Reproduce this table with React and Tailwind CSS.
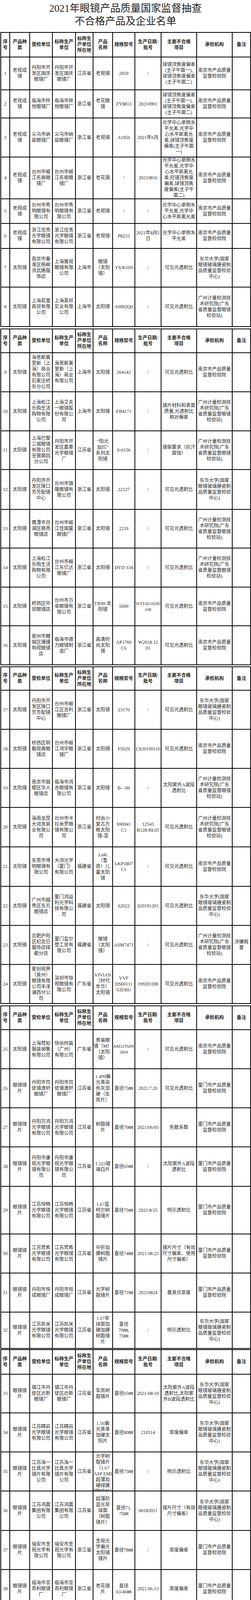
const COLS = "grid grid-cols-[23px_51px_58px_59px_45px_50px_57px_67px_91px_91px_47px]";
const HEADER = ["序|号", "产品种|类", "受检单位", "标称生产|单位", "标称生|产单位|所在地", "产品|名称", "规格型号", "生产日期/|批号", "主要不合格|项目", "承检机构", "备注"];

const NJ = "南京市产品质量|监督检验院";
const XM = "厦门市产品质量|监督检验院";
const BJ = "北京市产品质量|监督检验院";
const DH = "东华大学(国家|眼镜玻璃搪瓷制|品质量监督检验|中心)";
const GZ = "广州计量检测技|术研究院(广东|省质量监督眼镜|检验站)";
const XJ = "新疆维吾尔自治|区产品质量监督|检验研究院";
const KJ = "可见光透射比";
const JJ = "眼镜镜|片";

const SEGMENTS = [
  {
    mt: "",
    hh: 63,
    rows: [
      [84, ["1", "老视成|镜", "丹阳市开|发区国庆|眼镜厂", "丹阳市开|发区国庆|眼镜厂", "江苏省", "老视镜", "2059", "/", "球镜顶焦度偏差|(主子午面一),|球镜顶焦度偏差|(主子午面二)", NJ, ""]],
      [72, ["2", "老视成|镜", "临海市梓|悦眼镜厂", "临海市梓|悦眼镜厂", "浙江省", "老花眼|镜", "ZY8813", "20210901", "球镜顶焦度偏差|(主子午面一),|球镜顶焦度偏差|(主子午面二)", NJ, ""]],
      [100, ["3", "老视成|镜", "义乌市纳|兹眼镜厂", "义乌市纳|兹眼镜厂", "浙江省", "老视镜", "A1056", "2021年6月", "光学中心单侧水|平允差,光学中|心水平距离允|差,球镜顶焦度|偏差(主子午面|一)", NJ, ""]],
      [107, ["4", "老视成|镜", "台州市椒|江名振眼|镜厂", "台州市椒|江名振眼|镜厂", "浙江省", "老花镜", "/", "20210816", "光学中心单侧水|平允差,光学中|心水平距离允|差,柱镜顶焦度|偏差,球镜顶焦|度偏差(主子午|面二)", NJ, ""]],
      [63, ["5", "老视成|镜", "台州市秀|明眼镜有|限公司", "台州市秀|明眼镜有|限公司", "浙江省", "老视镜", "/", "/", "光学中心单侧水|平允差,光学中|心水平距离允差", NJ, ""]],
      [64, ["6", "老视成|镜", "浙江佳亮|光学眼镜|有限公司", "浙江佳亮|光学眼镜|有限公司", "浙江省", "老视镜", "P8233", "2021年8月5|日", "光学中心单侧水|平允差", NJ, ""]],
      [99, ["7", "太阳镜", "南京市秦|淮区杨柳|洪武路服|饰店", "上海雅视|眼镜有限|公司", "上海市", "眼镜|（太阳|镜）", "YS36109", "/", KJ, DH, ""]],
      [101, ["8", "太阳镜", "上海若凰|商贸有限|公司", "上海昊祁|实业有限|公司", "上海市", "太阳镜", "A0002Q0", "/", KJ, GZ, ""]],
    ],
  },
  {
    mt: "mt-[4px]",
    hh: 61,
    rows: [
      [100, ["9", "太阳镜", "海恩斯莫|里斯（上|海）商业|有限公司|石家庄桥|东分公司", "海恩斯莫|里斯（上|海）商业|有限公司", "上海市", "太阳镜", "264142", "/", KJ, NJ, ""]],
      [100, ["10", "太阳镜", "上海松江|乐购生活|购物有限|公司", "上海艾夫|一眼镜股|份有限公|司", "上海市", "太阳镜", "EB4171", "/", "镜片材料和表面|质量,光透射比|相对偏差", GZ, ""]],
      [99, ["11", "太阳镜", "上海巴黎|三城眼镜|有限公司|无锡第四|分公司", "丹阳市开|发区嘉豪|光学眼镜|厂", "江苏省", "“阳光|灿烂”|系列太|阳镜", "S-6156", "/", "镜架要求（抗汗|腐蚀）", GZ, ""]],
      [102, ["12", "太阳镜", "丹阳市开|发区陵口|芳芳配镜|中心", "台州市锦|隆眼镜有|限公司", "浙江省", "太阳镜", "22127", "/", KJ, DH, ""]],
      [99, ["13", "太阳镜", "鹰潭市月|湖区鼎亮|眼镜店", "台州市椒|江佳国富|眼镜厂", "浙江省", "太阳镜", "2219", "/", KJ, GZ, ""]],
      [100, ["14", "太阳镜", "上海松江|乐购生活|购物有限|公司", "台州市椒|江东亿达|眼镜厂", "浙江省", "太阳镜", "DYD 334", "/", KJ, GZ, ""]],
      [99, ["15", "太阳镜", "桥西区中|贸眼镜店", "台州市万|卓眼镜有|限公司", "浙江省", "TR90-太|阳镜", "5609", { t: "WTL0210200|108", c: "justify-center text-[11px]" }, KJ, NJ, ""]],
      [100, ["16", "太阳镜", "泉州市鲤|城区珊珊|明视眼镜|店", "临海市德|力眼镜制|造厂", "浙江省", "高清时|尚太阳|镜", "AP1760|C6", "W2018 12|01", KJ, NJ, ""]],
    ],
  },
  {
    mt: "mt-[3px]",
    hh: 60,
    rows: [
      [100, ["17", "太阳镜", "丹阳市开|发区陵口|芳芳配镜|中心", "台州市椒|江区吉利|眼镜厂", "浙江省", "太阳镜", "23170", "/", KJ, DH, ""]],
      [100, ["18", "太阳镜", "桥西区明|靓视典眼|镜店", "台州市椒|江鸿宇眼|镜厂", "浙江省", "太阳镜", "F5029", "LS20190110", KJ, NJ, ""]],
      [100, ["19", "太阳镜", "南京市鼓|楼区华人|眼镜店", "临海市鸿|吉眼镜有|限公司", "浙江省", "太阳镜", "B—06", "/", "太阳紫外A波段|透射比", GZ, ""]],
      [101, ["20", "太阳镜", "海南龙昆|大润发商|业有限公|司", "台州市卡|拉米罗眼|镜有限公|司", "浙江省", "时尚小|复古方|框太阳|镜-混", "S90941|C1", "12543|B128-BL05", KJ, GZ, ""]],
      [101, ["21", "太阳镜", "东莞市得|明眼镜有|限公司", "大鸿光学|（厦门）|有限公司", "福建省", "Luki|（鲁|奇）儿|童太阳|镜", "LKP1807|C1", "/", KJ, NJ, ""]],
      [100, ["22", "太阳镜", "广州市越|秀区东方|眼镜店", "厦门鸿益|利光学科|技有限公|司", "福建省", "太阳镜", "S2022", "S20191201", KJ, DH, ""]],
      [100, ["23", "太阳镜", "合肥庐阳|区纪念日|服饰店绿|都分店", "厦门玺尔|登工贸有|限公司", "福建省", "眼镜|（太阳|镜）", "ASM7471", "/", KJ, GZ, "涉嫌假|冒"]],
      [100, ["24", "太阳镜", "星创视界|（泉州）|眼镜有限|公司丰泽|浦西分公|司", "深圳市恒|视眼镜有|限公司", "广东省", "VIVIAN|（时代|年华）|太阳镜", "VVF|DS00111|GD/BU", "199201DB", KJ, NJ, ""]],
    ],
  },
  {
    mt: "mt-[4px]",
    hh: 61,
    rows: [
      [100, ["25", "太阳镜", "上海梵如|服装销售|有限公司", "快尚时装|（广州）|有限公司", "广东省", "男装眼|镜（M）|（太阳|镜）", { t: "AM32TA8N|2004", c: "justify-center text-[10.5px]" }, "/", KJ, NJ, ""]],
      [100, ["26", JJ, "丹阳市司|徒镇逸轩|眼镜厂", "丹阳市司|徒镇逸轩|眼镜厂", "江苏省", "1.499偏|光茶染|色灰加|硬（车|房片）", "直径75㎜", "2021.7.20", KJ, XM, ""]],
      [100, ["27", JJ, "丹阳万鸿|光学眼镜|有限公司", "丹阳万鸿|光学眼镜|有限公司", "江苏省", "树脂镜|片", "直径70㎜", "2021/06/05", "色散系数", XM, ""]],
      [101, ["28", JJ, "丹阳市康|视光学眼|镜有限公|司", "丹阳市康|视光学眼|镜有限公|司", "江苏省", "1.523玻|璃白片", "直径65㎜", "/", "太阳紫外A波段|透射比", XM, ""]],
      [122, ["29", JJ, "江苏恒畅|光学眼镜|有限公司", "江苏恒畅|光学眼镜|有限公司", "江苏省", "1.67蓝|柯尔树|脂镜片", "直径75㎜", "2021/8/25", "明示透射比", XM, ""]],
      [100, ["30", JJ, "江苏梵希|光学眼镜|有限公司", "江苏梵希|光学眼镜|有限公司", "江苏省", "中折加|膜树脂|镜片", "直径74㎜", "2021.08.23", "镜片尺寸（有效|尺寸偏差、使用|尺寸偏差）", XM, ""]],
      [100, ["31", JJ, "丹阳市恒|成眼镜厂", "丹阳市恒|成眼镜厂", "江苏省", "光学树|脂镜片", "直径71㎜", "20210824", "基准点厚度", XM, ""]],
      [93, ["32", JJ, "江苏凯米|光学眼镜|有限公司", "江苏凯米|光学眼镜|有限公司", "江苏省", "1.67非|球面加|硬加膜|树脂镜|片", "直径|70㎜,|75㎜", "/", "明示透射比", DH, ""]],
    ],
  },
  {
    mt: "mt-[1px]",
    hh: 63,
    rows: [
      [99, ["33", JJ, "镇江市丹|徒区达新|眼镜厂", "镇江市丹|徒区达新|眼镜厂", "江苏省", "车房树|脂镜片", "直径65㎜", "2021-08-10", "太阳紫外A波段|透射比,太阳紫|外B波段透射比", DH, ""]],
      [100, ["34", JJ, "江苏精岩|光学眼镜|有限公司", "江苏精岩|光学眼镜|有限公司", "江苏省", "1.56偏|光茶单|加硬太|阳片", "直径80㎜", "210514", "厚度偏差", DH, ""]],
      [100, ["35", JJ, "江苏海一|比真光学|镜片有限|公司", "江苏海一|比真光学|镜片有限|公司", "江苏省", { t: "光学树|脂镜片|（1.67|ASP EMI|超薄加|硬绿膜|树脂镜片）", c: "justify-start pt-[3px]" }, "直径75㎜", "/", "明示透射比", DH, ""]],
      [101, ["36", JJ, "江苏鸿晨|集团有限|公司", "江苏鸿晨|集团有限|公司", "江苏省", "超薄防|蓝光非|球面|（树脂|镜片）", "直径71,|75㎜", "08182021", "镜片尺寸（有效|尺寸偏差）", DH, ""]],
      [100, ["37", JJ, "瑞安市圣|视光学有|限公司", "瑞安市圣|视光学有|限公司", "浙江省", "圣视光|学偏光|太阳镜|镜片", "直径78㎜", "/", "厚度偏差", XM, ""]],
      [99, ["38", JJ, "临海市亚|奇利眼镜|厂", "临海市亚|奇利眼镜|厂", "浙江省", "老花镜|片", "直径|63/46㎜", "2021.06.13", "厚度偏差", XM, ""]],
      [100, ["39", JJ, "临海市雷|恩光学眼|镜有限公|司", "临海市雷|恩光学眼|镜有限公|司", "浙江省", "太阳镜|镜片", "直径65㎜", "2021年7月|25日", "镜片尺寸（有效|尺寸偏差、使用|尺寸偏差），可|见光透射比", XM, ""]],
      [101, ["40", "眼镜架", "丹阳市大|泊镇瑞利|达眼镜厂", "丹阳市大|泊镇瑞利|达眼镜厂", "江苏省", "眼镜架", "2126", "2021年8月", "抗汗腐蚀", BJ, ""]],
    ],
  },
  {
    mt: "mt-[2px]",
    hh: 62,
    rows: [
      [164, ["41", "眼镜架", "丹阳市开|发区昊翔|眼镜厂", "丹阳市开|发区昊翔|眼镜厂", "江苏省", "眼镜架", "8317", "2021.06.17", "抗拉性能", BJ, ""]],
      [100, ["42", "眼镜架", "丹阳市视|峰眼镜有|限公司", "丹阳市视|峰眼镜有|限公司", "江苏省", "光学眼|镜架", "S8907", "/", "抗拉性能", XJ, ""]],
      [100, ["43", "眼镜架", "丹阳市开|发区思米|克眼镜厂", "丹阳市开|发区思米|克眼镜厂", "江苏省", "光学眼|镜架", "79803", "/", "抗拉性能", XJ, ""]],
      [101, ["44", "眼镜架", "临海市伟|和眼镜有|限公司", "临海市伟|和眼镜有|限公司", "浙江省", "眼镜架", "9008", "2021.7.15", "抗拉性能", NJ, ""]],
      [99, ["45", "眼镜架", "临海市康|威眼镜厂", "临海市康|威眼镜厂", "浙江省", "眼镜架", "M2123", "2021年8月", "抗拉性能", BJ, ""]],
    ],
  },
];

function Cell({ v }) {
  const t = typeof v === "string" ? v : v.t;
  const extra = typeof v === "string" ? "justify-center" : v.c;
  return (
    <div className={`flex flex-col items-center ${extra} overflow-hidden text-center leading-[15px] border-r-2 border-black`}>
      {t.split("|").map((l, i) => (
        <div key={i} className="whitespace-pre">
          {l}
        </div>
      ))}
    </div>
  );
}

function Segment({ seg }) {
  return (
    <div className={`ml-[1px] w-[641px] border-t-2 border-l-2 border-black ${seg.mt}`}>
      <div className={`${COLS} border-b-2 border-black font-bold text-[#1e1e1e]`} style={{ height: seg.hh }}>
        {HEADER.map((h, i) => (
          <Cell key={i} v={h} />
        ))}
      </div>
      {seg.rows.map(([h, cells], ri) => (
        <div key={ri} className={`${COLS} border-b-2 border-black text-[#262626]`} style={{ height: h }}>
          {cells.map((c, ci) => (
            <Cell key={ci} v={c} />
          ))}
        </div>
      ))}
    </div>
  );
}

export default function App() {
  return (
    <div className="w-[642px] bg-white text-[12px] font-['Liberation_Serif','Noto_Sans_CJK_SC',serif]">
      <div className="h-[82px] pt-[5px] text-center text-[26px] leading-[33px] text-[#222]">
        <div>2021年眼镜产品质量国家监督抽查</div>
        <div>不合格产品及企业名单</div>
      </div>
      {SEGMENTS.map((s, i) => (
        <Segment key={i} seg={s} />
      ))}
    </div>
  );
}
